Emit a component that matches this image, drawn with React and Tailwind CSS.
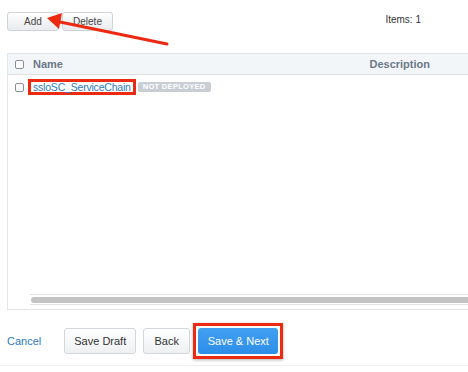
function Checkbox() {
  return <span className="block w-[9px] h-[9px] border border-[#8a8f96] rounded-[2px] bg-white shrink-0" />
}

function Button({ children, className = '' }) {
  return (
    <button className={`h-[26px] rounded-[3px] border border-[#d3d6da] bg-gradient-to-b from-white to-[#eef0f2] text-[11px] text-[#333] ${className}`}>
      {children}
    </button>
  )
}

export default function App() {
  return (
    <div className="relative w-[468px] h-[372px] bg-white overflow-hidden font-['Liberation_Sans',Arial,sans-serif]">
      <div className="flex items-start pt-[12px] pl-[7px]">
        <button className="w-[52px] h-[19px] rounded-[3px] border border-[#cfd2d6] bg-gradient-to-b from-white to-[#e9ebee] text-[10px] text-[#444]">Add</button>
        <button className="ml-[3px] w-[51px] h-[19px] rounded-[3px] border border-[#cfd2d6] bg-gradient-to-b from-white to-[#e9ebee] text-[10px] text-[#444]">Delete</button>
        <span className="ml-auto mr-[47px] text-[10px] text-[#333]">Items: 1</span>
      </div>

      <div className="ml-[7px] mt-[22px] h-[257px] border border-r-0 border-[#e1e4e8] flex flex-col">
        <div className="h-[21px] bg-[#f3f6f9] border-b border-[#dde1e6] flex items-center text-[11px] font-bold text-[#6b7889]">
          <span className="ml-[7px]"><Checkbox /></span>
          <span className="ml-[9px]">Name</span>
          <span className="ml-auto mr-[38px]">Description</span>
        </div>
        <div className="flex items-center h-[22px] mt-[1px]">
          <span className="ml-[7px]"><Checkbox /></span>
          <span className="ml-[4px] border-[3px] border-[#ec2a12] px-[2px] h-[16px] flex items-center text-[10.5px] tracking-[-0.2px] text-[#2c7ac0] leading-none">ssloSC_ServiceChain</span>
          <span className="ml-[2px] h-[10px] px-[5px] rounded-[2px] bg-[#c9ced5] text-white text-[7.5px] font-bold flex items-center leading-none tracking-[0.3px]">NOT DEPLOYED</span>
        </div>
        <div className="flex-1" />
        <div className="ml-[22px] mb-[4px] h-[11px] border-y border-[#e3e3e3] flex items-center">
          <div className="ml-[1px] h-[6px] flex-1 rounded-l-full bg-[#c4c4c4]" />
        </div>
      </div>

      <div className="flex items-center mt-[13px]">
        <span className="ml-[7px] text-[11px] text-[#2c7ac0]">Cancel</span>
        <Button className="ml-[23px] w-[72px]">Save Draft</Button>
        <Button className="ml-[7px] w-[47px]">Back</Button>
        <div className="ml-[3px] border-[3px] border-[#ec2a12] p-[2px] shadow-[0_1px_3px_rgba(0,0,0,0.3)]">
          <button className="block w-[80px] h-[26px] rounded-[3px] bg-gradient-to-b from-[#42a0f2] to-[#2d8de6] text-[11px] text-white">Save &amp; Next</button>
        </div>
      </div>
      <div className="absolute left-0 right-0 top-[365px] h-px bg-[#f0f0f0]" />

      <svg className="absolute left-0 top-0" width="200" height="60" viewBox="0 0 200 60">
        <line x1="167" y1="44" x2="60" y2="22" stroke="#ec2a12" strokeWidth="3" strokeLinecap="round" />
        <polygon points="47,18 62,13 59,29" fill="#ec2a12" />
      </svg>
    </div>
  )
}
